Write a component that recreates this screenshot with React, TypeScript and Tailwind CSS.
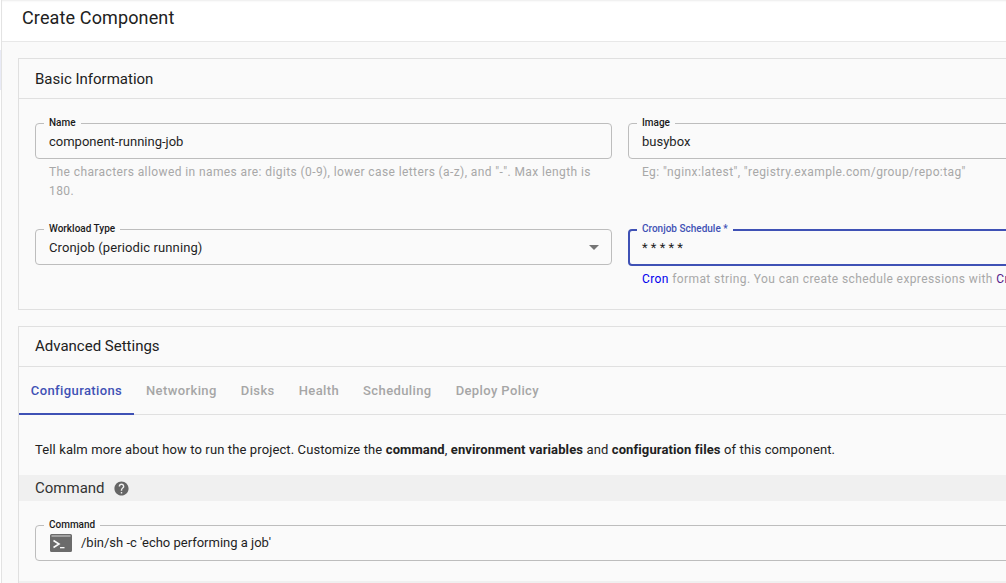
import { MdHelp } from 'react-icons/md';

const font = { fontFamily: 'Roboto, sans-serif' };

const Field = ({
    label,
    width = 'w-[577px]',
    focused = false,
    children,
}: {
    label: string;
    width?: string;
    focused?: boolean;
    children: React.ReactNode;
}) => (
    <div
        className={
            focused
                ? `${width} relative h-[37px] rounded border-2 border-[#3f51b5] pl-[12px] pr-3 flex items-center`
                : `${width} relative h-[36px] rounded border border-[#bdbdbd] pl-[13px] pr-3 flex items-center`
        }
    >
        <span
            className={
                focused
                    ? 'absolute left-[7px] top-[-7px] bg-[#fafafa] px-[5px] text-[10px] leading-[10px] font-medium text-[#3f51b5]'
                    : 'absolute left-[8px] top-[-6px] bg-[#fafafa] px-[5px] text-[10px] leading-[10px] font-medium text-[#1a1a1a]'
            }
        >
            {label}
        </span>
        {children}
    </div>
);

const TerminalIcon = () => (
    <svg width="22" height="18" viewBox="0 0 22 18" className="shrink-0 ml-[1px]">
        <path d="M0 1.5A1.5 1.5 0 0 1 1.5 0h19A1.5 1.5 0 0 1 22 1.5v15a1.5 1.5 0 0 1-1.5 1.5h-19A1.5 1.5 0 0 1 0 16.5z" fill="#6b6b6b" />
        <rect x="1.5" y="1.5" width="19" height="1" fill="#d8d8d8" />
        <path d="M3.5 6.5L9 10l-5.5 3.5" fill="none" stroke="#fafafa" strokeWidth="1.6" />
        <rect x="10" y="13" width="4.5" height="1.3" fill="#fafafa" />
    </svg>
);

export default function App() {
    return (
        <div style={font} className="w-[1006px] h-[583px] overflow-hidden bg-[#fafafa] flex text-[#1f1f1f]">
            <div className="w-[2px] shrink-0 bg-white border-r border-[#e3e3e3]">
                <div className="mt-[50px] h-[40px] bg-[#e8eaf6]" />
            </div>
            <div className="flex-1 min-w-0 overflow-hidden">
                <div className="h-[42px] w-full bg-white border-b border-[#e8e8e8] shadow-[inset_0_2px_2px_-1px_rgba(0,0,0,0.08)] flex items-center pl-[20px] pb-[6px]">
                    <h1 className="text-[18px] font-normal tracking-[0.13px] text-[#212121]">Create Component</h1>
                </div>

                <div className="w-[1220px] pl-[16px] pt-[16px]">
                    <section className="border border-[#e0e0e0]">
                        <div className="h-[40px] pt-[1px] border-b border-[#e0e0e0] flex items-center pl-[16px] text-[15px] text-[#212121]">
                            Basic Information
                        </div>
                        <div className="pl-[16px] pt-[24px] h-[210px]">
                            <div className="flex gap-[16px]">
                                <div>
                                    <Field label="Name">
                                        <span className="text-[13px] pt-[1px]">component-running-job</span>
                                    </Field>
                                    <p className="w-[552px] ml-[14px] mt-[4px] text-[12px] leading-[19px] tracking-[0.4px] text-[#a8a8a8]">
                                        The characters allowed in names are: digits (0-9), lower case letters (a-z), and "-". Max length is 180.
                                    </p>
                                </div>
                                <div>
                                    <Field label="Image">
                                        <span className="text-[13px] pt-[1px]">busybox</span>
                                    </Field>
                                    <p className="ml-[14px] mt-[4px] text-[12px] leading-[19px] tracking-[0.4px] text-[#a8a8a8]">
                                        Eg: "nginx:latest", "registry.example.com/group/repo:tag"
                                    </p>
                                </div>
                            </div>
                            <div className="flex gap-[16px] mt-[28px]">
                                <Field label="Workload Type">
                                    <span className="text-[13px] tracking-[0.11px] pt-[1px] flex-1">Cronjob (periodic running)</span>
                                    <span className="w-0 h-0 border-x-[5px] border-x-transparent border-t-[5px] border-t-[#757575]" />
                                </Field>
                                <div>
                                    <Field label="Cronjob Schedule *" focused>
                                        <span className="text-[13px]">* * * * *</span>
                                    </Field>
                                    <p className="ml-[14px] mt-[4px] text-[12px] leading-[19px] tracking-[0.4px] text-[#a8a8a8] whitespace-nowrap">
                                        <span className="text-[#0000ee]">Cron</span> format string. You can create schedule expressions with{' '}
                                        <span className="text-[#551a8b]">Cron Tab</span>
                                    </p>
                                </div>
                            </div>
                        </div>
                    </section>

                    <section className="mt-[16px] border border-[#e0e0e0]">
                        <div className="h-[40px] border-b border-[#e0e0e0] flex items-center pl-[16px] text-[15px] text-[#212121]">
                            Advanced Settings
                        </div>
                        <div className="h-[48px] border-b border-[#e0e0e0] flex text-[13px] font-medium tracking-[0.39px] text-[#a6a6a6]">
                            <div className="h-[48px] w-[115px] pt-[2px] border-b-2 border-[#3f51b5] text-[#3f51b5] flex items-center justify-center">
                                Configurations
                            </div>
                            <div className="ml-[12px] h-[47px] flex items-center">Networking</div>
                            <div className="ml-[24px] h-[47px] flex items-center">Disks</div>
                            <div className="ml-[24px] h-[47px] flex items-center">Health</div>
                            <div className="ml-[24px] h-[47px] flex items-center">Scheduling</div>
                            <div className="ml-[24px] h-[47px] flex items-center">Deploy Policy</div>
                        </div>
                        <p className="h-[60px] pt-[25px] pl-[16px] text-[13px] leading-[20px] tracking-[0.12px] text-[#212121]">
                            Tell kalm more about how to run the project. Customize the <b className="font-bold">command</b>, <b className="font-bold">environment variables</b> and <b className="font-bold">configuration files</b> of this component.
                        </p>
                        <div className="h-[26px] bg-[#f0f0f0] flex items-center pl-[16px] gap-[8px] text-[15px] text-[#333333]">
                            Command
                            <MdHelp size={17} color="#666666" />
                        </div>
                        <div className="pl-[16px] pt-[24px] h-[80px]">
                            <Field label="Command" width="w-[1170px]">
                                <TerminalIcon />
                                <span className="ml-[9px] text-[13px]">/bin/sh -c 'echo performing a job'</span>
                            </Field>
                        </div>
                        <div className="h-[26px] bg-[#f0f0f0]" />
                    </section>
                </div>
            </div>
        </div>
    );
}
